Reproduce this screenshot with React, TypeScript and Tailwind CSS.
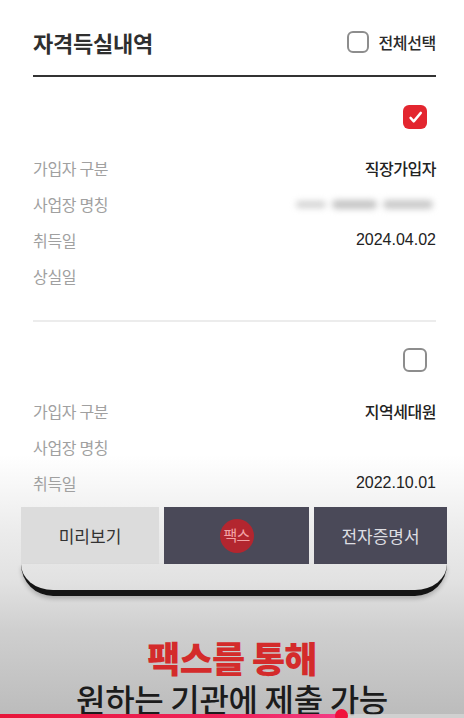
import React from 'react';

const Check: React.FC<{ checked?: boolean; small?: boolean }> = ({ checked, small }) =>
  checked ? (
    <span className="flex h-[24px] w-[24px] items-center justify-center rounded-[6px] bg-[#e3262f]">
      <svg viewBox="0 0 24 24" className="h-[17px] w-[17px]" fill="none" stroke="white" strokeWidth={3.4} strokeLinecap="round" strokeLinejoin="round">
        <path d="M5 12.5l4.5 5L19.5 5.5" />
      </svg>
    </span>
  ) : (
    <span className={`block rounded-[6px] border-2 border-[#8d8d8d] bg-white ${small ? 'h-[22px] w-[22px]' : 'h-[24px] w-[24px]'}`} />
  );

const Row: React.FC<{ label: string; children?: React.ReactNode }> = ({ label, children }) => (
  <div className="flex h-[36px] items-center justify-between">
    <span className="text-[16px] tracking-[-0.02em] text-[#a0a0a0]">{label}</span>
    {children}
  </div>
);

const Value: React.FC<{ children: React.ReactNode }> = ({ children }) => (
  <span className="text-[16px] font-medium tracking-[-0.03em] text-[#222]">{children}</span>
);

const DateValue: React.FC<{ children: React.ReactNode }> = ({ children }) => (
  <span className="font-['Liberation_Sans','Noto_Sans_CJK_KR',sans-serif] text-[16px] text-[#222]">{children}</span>
);

export default function App() {
  return (
    <div className="relative flex h-[718px] w-[464px] flex-col overflow-hidden bg-[linear-gradient(to_bottom,#ffffff_0px,#ffffff_455px,#ececec_530px,#e2e2e2_580px,#cfcfcf_630px,#bbbbbb_718px)] font-['Noto_Sans_CJK_KR',sans-serif]">
      <div className="pl-[33px] pr-[28px] pt-[20px]">
        <div className="flex h-[44px] items-center justify-between">
          <h1 className="text-[22px] font-bold tracking-[-0.01em] text-[#2f2f2f]">자격득실내역</h1>
          <div className="flex items-center gap-[9px]">
            <Check small />
            <span className="text-[16px] font-medium tracking-[-0.02em] text-[#2a2a2a]">전체선택</span>
          </div>
        </div>
        <div className="mt-[11px] h-[2px] bg-[#333]" />

        <div className="mt-[28px] flex justify-end pr-[9px]">
          <Check checked />
        </div>
        <div className="mt-[21px]">
          <Row label="가입자 구분">
            <Value>직장가입자</Value>
          </Row>
          <Row label="사업장 명칭">
            <div className="flex h-[12px] w-[140px] items-center gap-[6px] blur-[3px]">
              <span className="h-[7px] w-[30px] rounded-full bg-[#d2d2d2]" />
              <span className="h-[9px] w-[45px] rounded-full bg-[#c4c4c4]" />
              <span className="h-[9px] w-[50px] rounded-full bg-[#c9c9c9]" />
            </div>
          </Row>
          <Row label="취득일">
            <DateValue>2024.04.02</DateValue>
          </Row>
          <Row label="상실일" />
        </div>
        <div className="mt-[26px] h-[2px] bg-[#ececec]" />

        <div className="mt-[26px] flex justify-end pr-[9px]">
          <Check />
        </div>
        <div className="mt-[21px]">
          <Row label="가입자 구분">
            <Value>지역세대원</Value>
          </Row>
          <Row label="사업장 명칭" />
          <Row label="취득일">
            <DateValue>2022.10.01</DateValue>
          </Row>
        </div>
      </div>

      <div className="mt-[6px] flex gap-[5px] pl-[21px]">
        <div className="flex h-[57px] w-[138px] items-center justify-center bg-[#dcdcdc] text-[17px] text-[#333]">
          미리보기
        </div>
        <div className="flex h-[57px] w-[145px] items-center justify-center bg-[#4a4958]">
          <span className="flex h-[34px] w-[34px] items-center justify-center rounded-full bg-[#b3262f] text-[15px] tracking-[-0.05em] text-[#f2a3a6]">
            팩스
          </span>
        </div>
        <div className="flex h-[57px] w-[133px] items-center justify-center bg-[#4a4958] text-[17px] text-[#dedee2]">
          전자증명서
        </div>
      </div>

      <div className="ml-[21px] h-[38px] w-[426px] rounded-b-[36px] border-b-[6px] border-[#141414] shadow-[0_3px_4px_rgba(0,0,0,0.2)]" />

      <div className="mt-[40px] flex flex-col items-center">
        <p className="text-[36px] font-black leading-[42px] tracking-[-0.02em] text-[#d42b2b]">팩스를 통해</p>
        <p className="text-[32px] font-medium leading-[40px] tracking-[-0.01em] text-[#1c1c1c]">원하는 기관에 제출 가능</p>
      </div>

      <div className="absolute bottom-0 left-0 h-[4px] w-full bg-[#d9d9d9]/70" />
      <div className="absolute bottom-0 left-0 h-[4px] w-[341px] bg-[linear-gradient(to_right,#e8163a,#f0245c_70%,#f43d86)]" />
      <div className="absolute bottom-[-4px] left-[335px] h-[13px] w-[13px] rounded-full bg-[#f0123c]" />
    </div>
  );
}
